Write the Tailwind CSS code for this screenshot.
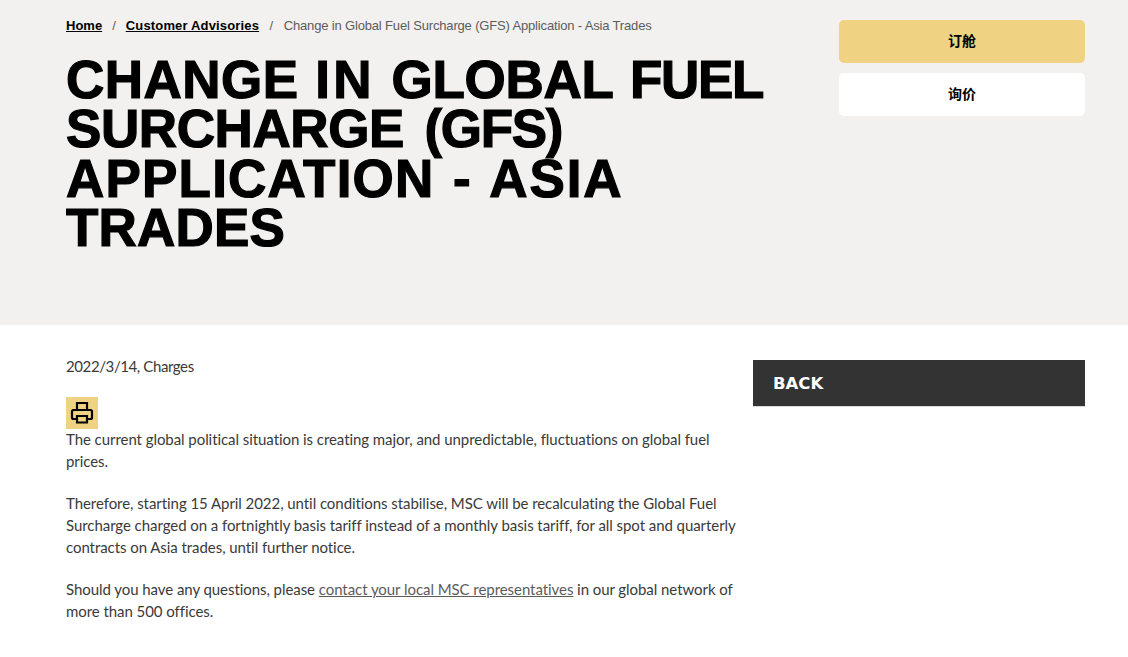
<!DOCTYPE html>
<html lang="zh">
<head>
    <meta charset="UTF-8">
    <meta name="viewport" content="width=device-width, initial-scale=1.0">
    <title>Change in Global Fuel Surcharge (GFS) Application - Asia Trades</title>
    <script src="https://cdn.jsdelivr.net/npm/@tailwindcss/browser@4"></script>
</head>
<body class="bg-white font-['Lato','Noto_Sans',sans-serif] overflow-hidden">
    <header class="bg-[#f2f1ef] h-[325px] pl-[66px] pr-[43px] flex justify-between">
        <div class="w-[720px] pt-[18px]">
            <nav class="flex items-center h-[16px] text-[13px] font-['Liberation_Sans',sans-serif] text-[#5c5c5c] whitespace-nowrap">
                <a href="#" class="font-bold text-black underline">Home</a>
                <span class="mx-[10px]">/</span>
                <a href="#" class="font-bold text-black underline tracking-[0.16px]">Customer Advisories</a>
                <span class="mx-[10.5px]">/</span>
                <span class="tracking-[-0.16px]">Change in Global Fuel Surcharge (GFS) Application - Asia Trades</span>
            </nav>
            <h1 class="mt-[21px] text-[53px] leading-[49.3px] font-bold text-black uppercase font-['Liberation_Sans',sans-serif] tracking-[0.2px] [word-spacing:1.5px] [-webkit-text-stroke:1.2px_black]"><span class="tracking-[0.5px]">Change</span> <span class="tracking-[3.5px]">in</span> <span class="tracking-[-0.3px]">Global</span> <span class="tracking-[-1.300px]">Fuel</span> <span class="tracking-[-0.4px]">Surcharge</span> <span class="ml-[4px] tracking-[-1.300px]">(GFS)</span> <span class="tracking-[1.2px]">Application</span> <span class="ml-[2px] mr-[2px]">-</span> <span class="tracking-[1.9px]">Asia</span> Trades</h1>
        </div>
        <div class="w-[246px] pt-[20px] flex flex-col gap-[10px] font-['Liberation_Sans','Noto_Sans_CJK_SC',sans-serif] text-sm font-bold text-black">
            <a href="#" class="h-[43px] pb-[2px] flex items-center justify-center rounded-[5px] bg-[#efd383]">订舱</a>
            <a href="#" class="h-[43px] pb-[2px] flex items-center justify-center rounded-[5px] bg-white">询价</a>
        </div>
    </header>
    <main class="pl-[66px] pr-[43px] flex justify-between">
        <article class="w-[672px] pt-[30px] text-[15px] leading-[22px] text-[#3a3a3a] tracking-[-0.06px]">
            <p class="tracking-[-0.4px]">2022/3/14, Charges</p>
            <button class="mt-[20px] -mb-[1px] w-[32px] h-[32px] bg-[#efd383] flex items-center justify-center" aria-label="Print">
                <svg width="24" height="24" viewBox="0 0 24 24" fill="none" stroke="black" stroke-width="2.200">
                    <path d="M7 9V2h10v7"/>
                    <path d="M7 18H3.500A1.500 1.500 0 0 1 2 16.500v-6A1.500 1.500 0 0 1 3.500 9h17a1.500 1.500 0 0 1 1.500 1.500v6a1.500 1.500 0 0 1-1.500 1.500H17"/>
                    <path d="M7 15h10v6.500H7z"/>
                </svg>
            </button>
            <p>The current global political situation is creating major, and unpredictable, fluctuations on global fuel prices.</p>
            <p class="mt-[20px]">Therefore, starting 15 April 2022, until conditions stabilise, MSC will be recalculating the Global Fuel Surcharge charged on a fortnightly basis tariff instead of a monthly basis tariff, for all spot and quarterly contracts on Asia trades, until further notice.</p>
            <p class="mt-[20px]">Should you have any questions, please <a href="#" class="underline text-[#5c5c5c]">contact your local MSC representatives</a> in our global network of more than 500 offices.</p>
        </article>
        <aside class="w-[332px] pt-[35px]">
            <a href="#" class="h-[47px] pt-[2px] flex items-center pl-[20px] bg-[#333333] border-b border-[#d9d9d9] text-white font-bold text-[16.5px] font-['DejaVu_Sans',sans-serif]">BACK</a>
        </aside>
    </main>
</body>
</html>
